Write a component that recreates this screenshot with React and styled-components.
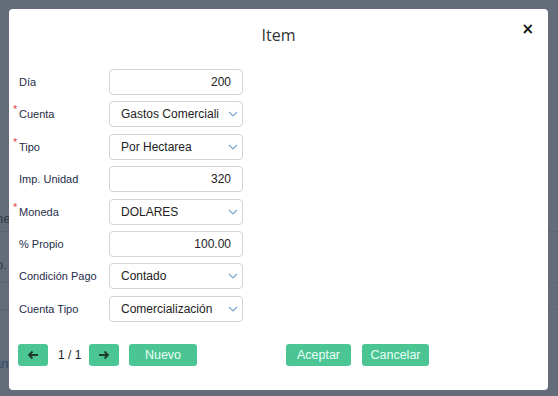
import React from 'react';
import styled, { createGlobalStyle } from 'styled-components';

const GlobalStyle = createGlobalStyle`
  html, body {
    margin: 0;
    padding: 0;
    width: 558px;
    height: 396px;
    overflow: hidden;
    background: #fff;
    font-family: 'Liberation Sans', Arial, sans-serif;
  }
`;

const fields = [
  { label: 'Día', value: '200', kind: 'number' },
  { label: 'Cuenta', value: 'Gastos Comerciali', kind: 'select', required: true },
  { label: 'Tipo', value: 'Por Hectarea', kind: 'select', required: true },
  { label: 'Imp. Unidad', value: '320', kind: 'number' },
  { label: 'Moneda', value: 'DOLARES', kind: 'select', required: true },
  { label: '% Propio', value: '100.00', kind: 'number' },
  { label: 'Condición Pago', value: 'Contado', kind: 'select' },
  { label: 'Cuenta Tipo', value: 'Comercialización', kind: 'select' }
];

const Chevron = () => (
  <svg width="10" height="6" viewBox="0 0 10 6">
    <path d="M1 1l4 4 4-4" fill="none" stroke="#7fa6d6" strokeWidth="1.2" />
  </svg>
);

const Arrow = ({ dir }) => (
  <svg width="12" height="10" viewBox="0 0 12 10">
    {dir === 'left' ? (
      <path d="M11 5H2M5.5 1.5L2 5l3.5 3.5" fill="none" stroke="#1d3a2c" strokeWidth="1.8" />
    ) : (
      <path d="M1 5h9M6.5 1.5L10 5 6.5 8.5" fill="none" stroke="#1d3a2c" strokeWidth="1.8" />
    )}
  </svg>
);

const App = () => {
  return (
    <Page>
      <GlobalStyle />
      <Background>
        <BgRow $h={32} $pt={11} $line>
          <BgText>ne</BgText>
        </BgRow>
        <BgRow $h={51} $pt={25} $line>
          <BgText>p.</BgText>
        </BgRow>
        <BgRow $h={27} $line />
        <BgRow $h={80} $pt={46}>
          <BgLink>an</BgLink>
        </BgRow>
      </Background>
      <Overlay>
        <Modal>
          <Header>
            <Title>Item</Title>
            <Close>×</Close>
          </Header>
          <Form>
            {fields.map((f) => (
              <Row key={f.label}>
                <Label>
                  {f.required && <Star>*</Star>}
                  {f.label}
                </Label>
                {f.kind === 'select' ? (
                  <SelectBox>
                    <SelectText>{f.value}</SelectText>
                    <Chevron />
                  </SelectBox>
                ) : (
                  <NumberBox>{f.value}</NumberBox>
                )}
              </Row>
            ))}
          </Form>
          <Footer>
            <Group>
              <Button $w={30}>
                <Arrow dir="left" />
              </Button>
              <Pager>1 / 1</Pager>
              <Button $w={30}>
                <Arrow dir="right" />
              </Button>
              <Button $w={68}>Nuevo</Button>
            </Group>
            <Group $right>
              <Button $w={65}>Aceptar</Button>
              <Button $w={67}>Cancelar</Button>
            </Group>
          </Footer>
        </Modal>
      </Overlay>
    </Page>
  );
};

export default App;

const Page = styled.div`
  position: relative;
  width: 558px;
  height: 396px;
  overflow: hidden;
`;

const Background = styled.div`
  display: flex;
  flex-direction: column;
  padding-top: 200px;
`;

const BgRow = styled.div`
  height: ${(p) => p.$h}px;
  padding-top: ${(p) => p.$pt || 0}px;
  box-sizing: border-box;
  border-bottom: ${(p) => (p.$line ? '1px solid #ddd' : 'none')};
  display: flex;
  align-items: flex-start;
  line-height: 15px;
`;

const BgText = styled.span`
  font-size: 13px;
  color: #333;
  margin-left: -4px;
`;

const BgLink = styled.span`
  font-size: 13px;
  color: #2a6ab0;
  margin-left: -6px;
`;

const Overlay = styled.div`
  position: absolute;
  inset: 0;
  background: rgba(48, 59, 78, 0.75);
  padding: 9px 10px 6px 9px;
  box-sizing: border-box;
`;

const Modal = styled.div`
  background: #fff;
  border-radius: 4px;
  height: 381px;
  box-sizing: border-box;
  padding: 0 10px;
  display: flex;
  flex-direction: column;
`;

const Header = styled.div`
  position: relative;
  height: 60px;
  display: flex;
  align-items: center;
  justify-content: center;
  padding-bottom: 13px;
  box-sizing: border-box;
`;

const Title = styled.div`
  font-family: 'Open Sans', sans-serif;
  font-size: 16px;
  color: #333;
  padding-top: 5px;
`;

const Close = styled.div`
  position: absolute;
  right: 4px;
  top: 11px;
  font-family: 'DejaVu Sans', sans-serif;
  font-size: 15px;
  font-weight: bold;
  color: #111;
`;

const Form = styled.div`
  display: flex;
  flex-direction: column;
  gap: 6.4px;
`;

const Row = styled.div`
  display: flex;
  align-items: center;
  height: 26px;
`;

const Label = styled.div`
  position: relative;
  width: 90px;
  font-size: 11px;
  color: #1f2d4a;
`;

const Star = styled.span`
  position: absolute;
  left: -6px;
  top: -5px;
  color: #e0473f;
  font-size: 11px;
`;

const Field = styled.div`
  width: 134px;
  height: 26px;
  box-sizing: border-box;
  border: 1px solid #d4d4d4;
  border-radius: 4px;
  display: flex;
  align-items: center;
  font-size: 12px;
  color: #222;
`;

const NumberBox = styled(Field)`
  justify-content: flex-end;
  padding-right: 11px;
`;

const SelectBox = styled(Field)`
  justify-content: space-between;
  padding: 0 4px 0 11px;
`;

const SelectText = styled.span`
  white-space: nowrap;
  overflow: hidden;
  width: 98px;
`;

const Footer = styled.div`
  display: flex;
  align-items: center;
  margin-top: 22px;
`;

const Group = styled.div`
  display: flex;
  align-items: center;
  gap: 10px;
  margin-left: ${(p) => (p.$right ? '89px' : '-1px')};
  & > * + * {
    margin-left: ${(p) => (p.$right ? '1px' : '0')};
  }
`;

const Button = styled.div`
  width: ${(p) => p.$w}px;
  height: 22px;
  background: #4bc594;
  border-radius: 3px;
  color: #eafff6;
  font-size: 12.5px;
  display: flex;
  align-items: center;
  justify-content: center;
`;

const Pager = styled.div`
  font-size: 12px;
  color: #222;
  width: 21px;
  white-space: nowrap;
  text-align: center;
`;
